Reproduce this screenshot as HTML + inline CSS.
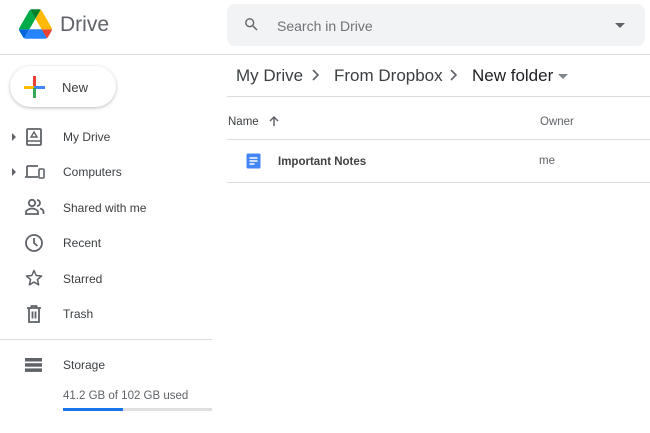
<!DOCTYPE html>
<html><head><style>
*{margin:0;padding:0;box-sizing:border-box}
body{width:650px;height:433px;background:#fff;font-family:"Liberation Sans",Arial,sans-serif;position:relative;overflow:hidden;color:#3c4043}
.a{position:absolute}
.nav{position:absolute;left:63px;font-size:12px;color:#3c4043}
.ic{position:absolute;left:24px}
</style></head><body>
<svg class="a" style="left:19px;top:9px" width="33" height="30" viewBox="0 0 87.3 78">
<path d="M6.6 66.85l3.850 6.65c.8 1.4 1.95 2.5 3.3 3.3L27.5 53H0c0 1.55.4 3.1 1.2 4.5z" fill="#0066da"/>
<path d="M43.65 25L29.9 1.2c-1.35.8-2.5 1.9-3.3 3.3L1.2 48.5A9.06 9.06 0 0 0 0 53h27.5z" fill="#00ac47"/>
<path d="M73.55 76.8c1.35-.8 2.5-1.9 3.3-3.3l1.6-2.75 7.65-13.25c.8-1.4 1.2-2.95 1.2-4.5H59.8l5.85 11.5z" fill="#ea4335"/>
<path d="M43.65 25L57.4 1.2C56.05.4 54.5 0 52.9 0H34.4c-1.6 0-3.15.45-4.5 1.2z" fill="#00832d"/>
<path d="M59.8 53H27.5L13.75 76.8c1.35.8 2.9 1.2 4.5 1.2h50.8c1.6 0 3.15-.45 4.5-1.2z" fill="#2684fc"/>
<path d="M73.4 26.5L60.7 4.5c-.8-1.4-1.950-2.5-3.3-3.3L43.65 25 59.8 53h27.45c0-1.55-.4-3.1-1.2-4.5z" fill="#ffba00"/>
</svg>
<div class="a" style="left:60px;top:13px;font-size:21px;color:#5f6368">Drive</div>
<div class="a" style="left:227px;top:4px;width:418px;height:42px;background:#f1f3f4;border-radius:8px"></div>
<svg class="a" style="left:243px;top:16px" width="17" height="17" viewBox="0 0 24 24"><path d="M15.5 14h-.79l-.28-.27A6.47 6.47 0 0 0 16 9.5 6.5 6.5 0 1 0 9.5 16c1.61 0 3.09-.59 4.23-1.570l.27.28v.79l5 4.99L20.49 19l-4.99-5zm-6 0C7.01 14 5 11.99 5 9.5S7.01 5 9.5 5 14 7.01 14 9.5 11.99 14 9.5 14z" fill="#5f6368"/></svg>
<div class="a" style="left:277px;top:18px;font-size:14px;color:#6f7377">Search in Drive</div>
<div class="a" style="left:615px;top:23px;border-left:5px solid transparent;border-right:5px solid transparent;border-top:5px solid #5f6368"></div>
<div class="a" style="left:0;top:54px;width:650px;height:1px;background:#dadce0"></div>

<div class="a" style="left:10px;top:66px;width:106px;height:41px;border-radius:21px;background:#fff;box-shadow:0 1px 3px rgba(60,64,67,.35)"></div>
<div class="a" style="left:24px;top:86px;width:10px;height:3px;background:#fbbc04"></div>
<div class="a" style="left:34px;top:86px;width:11px;height:3px;background:#4285f4"></div>
<div class="a" style="left:33px;top:76px;width:3px;height:10px;background:#ea4335"></div>
<div class="a" style="left:33px;top:88px;width:3px;height:10px;background:#34a853"></div>
<div class="a" style="left:62px;top:80px;font-size:13px;color:#3c4043">New</div>

<div class="a" style="left:12px;top:133px;border-top:4px solid transparent;border-bottom:4px solid transparent;border-left:4px solid #5f6368"></div>
<div class="a" style="left:12px;top:168px;border-top:4px solid transparent;border-bottom:4px solid transparent;border-left:4px solid #5f6368"></div>
<svg class="ic" style="top:127px" width="20" height="20" viewBox="0 0 20 20"><rect x="3" y="2" width="14" height="16" rx="1" fill="none" stroke="#5f6368" stroke-width="1.8"/><line x1="3" y1="14" x2="17" y2="14" stroke="#5f6368" stroke-width="1.5"/><path d="M10 5l3 5H7z" fill="none" stroke="#5f6368" stroke-width="1.4"/></svg>
<svg class="ic" style="top:163px" width="22" height="18" viewBox="0 0 22 18"><path d="M3 3h11M3 3v10M1 14h13" stroke="#5f6368" stroke-width="1.8" fill="none"/><rect x="15" y="6" width="5" height="9" rx="1" fill="none" stroke="#5f6368" stroke-width="1.6"/></svg>
<svg class="ic" style="top:198px" width="22" height="18" viewBox="0 0 22 18"><circle cx="8" cy="5" r="3.2" fill="none" stroke="#5f6368" stroke-width="1.8"/><path d="M2 16v-2c0-2 4-3.5 6-3.5s6 1.5 6 3.5v2z" fill="none" stroke="#5f6368" stroke-width="1.8"/><path d="M13 2a3 3 0 0 1 0 6M16 10.5c2 .5 3.5 1.5 3.5 3.5v2" fill="none" stroke="#5f6368" stroke-width="1.8"/></svg>
<svg class="ic" style="top:233px" width="20" height="20" viewBox="0 0 20 20"><circle cx="10" cy="10" r="8" fill="none" stroke="#5f6368" stroke-width="1.8"/><path d="M10 5v5l3.5 3" fill="none" stroke="#5f6368" stroke-width="1.8"/></svg>
<svg class="ic" style="top:268px" width="20" height="20" viewBox="0 0 24 24"><path d="M12 3l2.6 6 6.4.6-4.9 4.3 1.5 6.3L12 16.9l-5.6 3.3 1.5-6.3L3 9.6l6.4-.6z" fill="none" stroke="#5f6368" stroke-width="1.8" stroke-linejoin="round"/></svg>
<svg class="ic" style="top:304px" width="20" height="20" viewBox="0 0 20 20"><path d="M3 4h14M7.5 4V2h5v2M5 4v14h10V4M8.5 7.5v7M11.5 7.5v7" fill="none" stroke="#5f6368" stroke-width="1.8"/></svg>
<div class="nav" style="top:130px">My Drive</div>
<div class="nav" style="top:165px">Computers</div>
<div class="nav" style="top:201px">Shared with me</div>
<div class="nav" style="top:236px">Recent</div>
<div class="nav" style="top:272px">Starred</div>
<div class="nav" style="top:307px">Trash</div>
<div class="a" style="left:0;top:339px;width:212px;height:1px;background:#dadce0"></div>
<svg class="ic" style="top:357px" width="20" height="16" viewBox="0 0 20 16"><rect x="1" y="1" width="17" height="3.5" fill="#5f6368"/><rect x="1" y="6.2" width="17" height="3.5" fill="#5f6368"/><rect x="1" y="11.4" width="17" height="3.5" fill="#5f6368"/></svg>
<div class="nav" style="top:358px">Storage</div>
<div class="nav" style="top:390px;font-size:11.5px;color:#5f6368">41.2 GB of 102 GB used</div>
<div class="a" style="left:63px;top:408px;width:149px;height:3px;background:#e0e0e0"></div>
<div class="a" style="left:63px;top:408px;width:60px;height:3px;background:#1a73e8"></div>

<div class="a" style="left:236px;top:66px;font-size:17px;color:#3c4043">My Drive</div>
<svg class="a" style="left:311px;top:69px" width="10" height="12" viewBox="0 0 10 12"><path d="M2 1l5 5-5 5" fill="none" stroke="#5f6368" stroke-width="1.6"/></svg>
<div class="a" style="left:334px;top:66px;font-size:17px;color:#3c4043">From Dropbox</div>
<svg class="a" style="left:449px;top:69px" width="10" height="12" viewBox="0 0 10 12"><path d="M2 1l5 5-5 5" fill="none" stroke="#5f6368" stroke-width="1.6"/></svg>
<div class="a" style="left:472px;top:66px;font-size:17px;color:#202124">New folder</div>
<div class="a" style="left:558px;top:74px;border-left:5px solid transparent;border-right:5px solid transparent;border-top:5px solid #80868b"></div>
<div class="a" style="left:227px;top:96px;width:423px;height:1px;background:#dadce0"></div>
<div class="a" style="left:228px;top:116px;font-size:11.5px;color:#3c4043">Name</div>
<svg class="a" style="left:268px;top:115px" width="12" height="12" viewBox="0 0 12 12"><path d="M6 11V2M2 6l4-4 4 4" fill="none" stroke="#5f6368" stroke-width="1.5"/></svg>
<div class="a" style="left:540px;top:116px;font-size:11.5px;color:#5f6368">Owner</div>
<div class="a" style="left:227px;top:139px;width:423px;height:1px;background:#dadce0"></div>
<svg class="a" style="left:246px;top:153px" width="15" height="16" viewBox="0 0 15 16"><rect x="0.5" y="0.5" width="14" height="15" rx="1.5" fill="#4285f4"/><path d="M3.5 5h8M3.5 8h8M3.5 11h5" stroke="#fff" stroke-width="1.4"/></svg>
<div class="a" style="left:278px;top:156px;font-size:11.5px;color:#202124;font-weight:bold;opacity:.85">Important Notes</div>
<div class="a" style="left:539px;top:155px;font-size:11.5px;color:#5f6368">me</div>
<div class="a" style="left:227px;top:182px;width:423px;height:1px;background:#dadce0"></div>
</body></html>
